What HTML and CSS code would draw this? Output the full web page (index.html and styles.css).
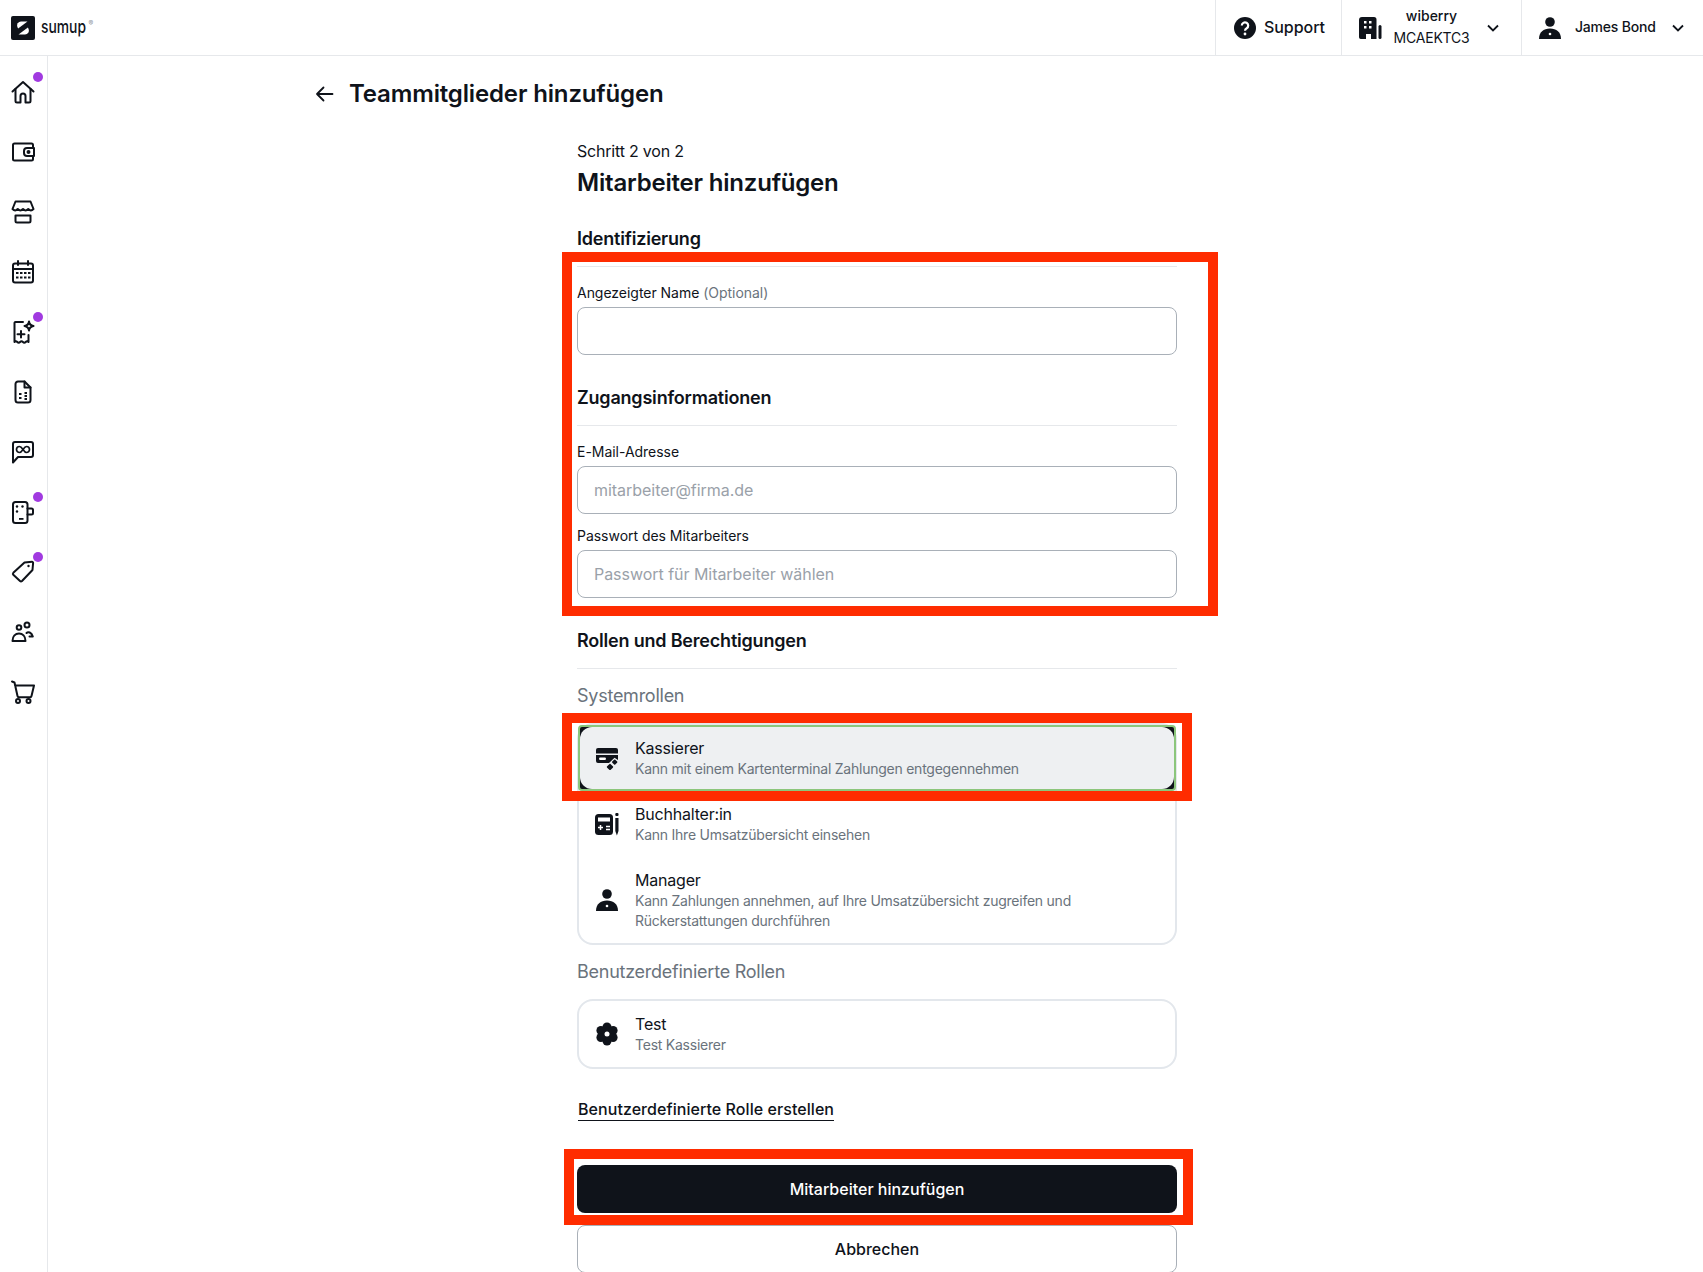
FILE: index.html
```html
<!DOCTYPE html>
<html lang="de">
<head>
    <meta charset="UTF-8">
    <meta name="viewport" content="width=device-width, initial-scale=1.0">
    <title>Teammitglieder hinzufügen</title>
    <link rel="stylesheet" href="styles.css">
</head>
<body>
    <header class="topbar">
        <div class="brand">
            <svg class="brand-mark" viewBox="0 0 24 24">
                <rect width="24" height="24" rx="2" fill="#0f131a"/>
                <path d="M16.5 5.5H10a4 4 0 0 0-3.6 5.6l.7 1.4 9.4-7z" fill="#fff"/>
                <path d="M7.5 18.5H14a4 4 0 0 0 3.6-5.6l-.7-1.4-9.4 7z" fill="#fff"/>
            </svg>
            <span class="brand-name">sumup</span><span class="brand-reg">®</span>
        </div>
        <div class="topbar-cells">
            <div class="cell cell-support">
                <svg class="icon" viewBox="0 0 24 24">
                    <circle cx="12" cy="12" r="11" fill="#0f131a"/>
                    <path d="M8.8 9.6a3.2 3.2 0 1 1 4.9 2.7c-1.1.7-1.7 1.2-1.7 2.5" fill="none" stroke="#fff" stroke-width="2.2"/>
                    <circle cx="12" cy="18" r="1.4" fill="#fff"/>
                </svg>
                <span class="support-label">Support</span>
            </div>
            <div class="cell cell-merchant">
                <svg class="icon" viewBox="0 0 24 24">
                    <path d="M3 1h12a2.5 2.5 0 0 1 2.5 2.5V23H12v-5H7v5H1.8A1.8 1.8 0 0 1 0 21.2V4a3 3 0 0 1 3-3z" fill="#0f131a"/>
                    <rect x="19.5" y="9" width="3" height="14" rx="1.5" fill="#0f131a"/>
                    <g fill="#fff">
                        <rect x="5" y="5" width="2.5" height="2.5"/><rect x="10" y="5" width="2.5" height="2.5"/>
                        <rect x="5" y="10" width="2.5" height="2.5"/><rect x="10" y="10" width="2.5" height="2.5"/>
                    </g>
                </svg>
                <div class="merchant-text">
                    <span class="merchant-name">wiberry</span>
                    <span class="merchant-code">MCAEKTC3</span>
                </div>
                <svg class="chevron" viewBox="0 0 16 16"><path d="M3 5.5l5 5 5-5"/></svg>
            </div>
            <div class="cell cell-user">
                <svg class="icon" viewBox="0 0 24 24">
                    <circle cx="12" cy="6" r="4.8" fill="#0f131a"/>
                    <path d="M1 23c0-7 4.5-10.5 11-10.5S23 16 23 23z" fill="#0f131a"/>
                    <circle cx="12" cy="18" r="1.3" fill="#fff"/>
                </svg>
                <span class="user-name">James Bond</span>
                <svg class="chevron" viewBox="0 0 16 16"><path d="M3 5.5l5 5 5-5"/></svg>
            </div>
        </div>
    </header>

    <div class="page">
        <nav class="sidebar">
            <a class="nav-item">
                <svg class="icon line" viewBox="0 0 24 24"><path d="M1.5 11.5 12 2l10.5 9.5"/><path d="M4.5 9v12a1.500 1.500 0 0 0 1.500 1.500h3.500V16a2.500 2.500 0 0 1 5 0v6.500H18a1.500 1.500 0 0 0 1.500-1.500V9"/></svg>
                <span class="dot"></span>
            </a>
            <a class="nav-item">
                <svg class="icon line" viewBox="0 0 24 24"><path d="M22 8V5a1.500 1.500 0 0 0-1.500-1.500h-17A1.500 1.500 0 0 0 2 5v14a1.500 1.500 0 0 0 1.500 1.500h17A1.500 1.500 0 0 0 22 19v-3"/><path d="M23 8h-7a3 3 0 0 0-3 3v2a3 3 0 0 0 3 3h7z"/><circle cx="17.5" cy="12" r="1" fill="#0f131a"/></svg>
            </a>
            <a class="nav-item">
                <svg class="icon line" viewBox="0 0 24 24"><path d="M4.500 1.500h15l3 7.500q-2.600 2.800-5.250 0q-2.600 2.800-5.250 0q-2.600 2.800-5.250 0q-2.600 2.800-5.250 0z"/><path d="M4.500 15.500h15V21a1.500 1.500 0 0 1-1.500 1.500H6A1.500 1.500 0 0 1 4.500 21z"/></svg>
            </a>
            <a class="nav-item">
                <svg class="icon line" viewBox="0 0 24 24"><rect x="2" y="3.5" width="20" height="19" rx="2"/><path d="M2 9h20M7 1v4M17 1v4"/><g class="icon-dots"><rect x="5" y="12" width="2.5" height="2"/><rect x="9" y="12" width="2.500" height="2"/><rect x="13" y="12" width="2.5" height="2"/><rect x="17" y="12" width="2.5" height="2"/><rect x="5" y="16.5" width="2.5" height="2"/><rect x="9" y="16.5" width="2.5" height="2"/><rect x="13" y="16.5" width="2.5" height="2"/><rect x="17" y="16.5" width="2.5" height="2"/></g></svg>
            </a>
            <a class="nav-item">
                <svg class="icon line" viewBox="0 0 24 24"><path d="M12 2H4.500a1 1 0 0 0-1 1v19q1.400-1.500 2.800 0t2.800 0t2.800 0t2.800 0t2.800 0V15"/><path d="M18 1.500c.4 3 1.500 4.100 4.500 4.500-3 .4-4.100 1.500-4.500 4.500-.4-3-1.500-4.100-4.500-4.500 3-.4 4.100-1.500 4.500-4.500z"/><path d="M10 11v6.500M6.500 14.200h7"/></svg>
                <span class="dot"></span>
            </a>
            <a class="nav-item">
                <svg class="icon line" viewBox="0 0 24 24"><path d="M13.500 1.500H7A2.500 2.500 0 0 0 4.500 4v16A2.500 2.500 0 0 0 7 22.500h10a2.500 2.500 0 0 0 2.500-2.500V7.500z"/><path d="M13.500 1.500v6h6"/><g class="icon-dots"><rect x="8" y="13" width="2.5" height="2"/><rect x="8" y="17" width="2.5" height="2"/><rect x="13.5" y="12" width="2.5" height="2"/><rect x="13.5" y="15" width="2.5" height="2"/><rect x="13.5" y="18" width="2.5" height="2"/></g></svg>
            </a>
            <a class="nav-item">
                <svg class="icon line" viewBox="0 0 24 24"><path d="M2 22.500V4a2 2 0 0 1 2-2h16a2 2 0 0 1 2 2v11a2 2 0 0 1-2 2H7z"/><path d="M8.500 6.500a3 3 0 0 0 0 6c3 0 4-6 7-6a3 3 0 0 1 0 6c-3 0-4-6-7-6z" stroke-width="1.7"/></svg>
            </a>
            <a class="nav-item">
                <svg class="icon line" viewBox="0 0 24 24"><rect x="2" y="2" width="14.5" height="21" rx="2.5"/><path d="M16.500 8.500h4a1.500 1.500 0 0 1 1.500 1.500v3a1.500 1.500 0 0 1-1.500 1.500h-4"/><g class="icon-dots"><circle cx="6" cy="6.5" r="1.2"/><circle cx="11.5" cy="6.5" r="1.2"/><circle cx="6" cy="11.5" r="1.2"/><rect x="8" y="18" width="4.5" height="1.8"/></g></svg>
                <span class="dot"></span>
            </a>
            <a class="nav-item">
                <svg class="icon line" viewBox="0 0 24 24"><path d="M13.500 2.500 21 1.800a1 1 0 0 1 1.100 1.100L21.500 10 11 21a1.500 1.500 0 0 1-2 0l-6.700-6.200a1.500 1.500 0 0 1 0-2z"/><circle class="icon-dots" cx="17.5" cy="6" r="1.2"/></svg>
                <span class="dot"></span>
            </a>
            <a class="nav-item">
                <svg class="icon line" viewBox="0 0 24 24"><circle cx="8" cy="7.5" r="2.300"/><circle cx="16" cy="5" r="2.500"/><path d="M1.500 21c0-5 3-7.500 6.500-7.500s6.500 2.500 6.500 7.500z"/><path d="M15.500 13c1.500-1.500 5-1 6.300 3.500h-3.300"/></svg>
            </a>
            <a class="nav-item">
                <svg class="icon line" viewBox="0 0 24 24"><path d="M1 1.500l2.500 1 3 13.500a1.500 1.500 0 0 0 1.500 1.200h11a1.500 1.500 0 0 0 1.500-1.200L23 5.500H4"/><circle cx="7" cy="21" r="2"/><circle cx="17.5" cy="21" r="2"/></svg>
            </a>
        </nav>

        <main class="content">
            <div class="title-row">
                <svg class="icon arrow" viewBox="0 0 24 24"><path d="M19.5 12H4M10.500 5.500 4 12l6.500 6.500"/></svg>
                <h1>Teammitglieder hinzufügen</h1>
            </div>

            <form class="form">
                <p class="step">Schritt 2 von 2</p>
                <h2>Mitarbeiter hinzufügen</h2>

                <h3 class="section first">Identifizierung</h3>
                <label class="label">Angezeigter Name <span class="optional">(Optional)</span></label>
                <input class="input" type="text">

                <h3 class="section">Zugangsinformationen</h3>
                <label class="label">E-Mail-Adresse</label>
                <input class="input" type="text" placeholder="mitarbeiter@firma.de">
                <label class="label next">Passwort des Mitarbeiters</label>
                <input class="input" type="text" placeholder="Passwort für Mitarbeiter wählen">

                <h3 class="section">Rollen und Berechtigungen</h3>
                <p class="group-title system">Systemrollen</p>
                <div class="role-group">
                    <div class="role-selected">
                        <div class="role">
                            <svg class="icon" viewBox="0 0 24 24">
                                <path d="M3 2h18a2 2 0 0 1 2 2v3.500H1V4a2 2 0 0 1 2-2z"/>
                                <path d="M1 9h22v5l-3.500-2.300-5.500 5.300H3a2 2 0 0 1-2-2z"/>
                                <rect x="4" y="11.5" width="7" height="2.5" rx="1.2" fill="#fff"/>
                                <rect x="12.5" y="18.5" width="5" height="5" rx="1" transform="rotate(45 15 21)"/>
                                <rect x="17.6" y="14" width="4.2" height="4.2" rx=".8" transform="rotate(45 19.7 16.1)"/>
                            </svg>
                            <div class="role-text">
                                <span class="role-name">Kassierer</span>
                                <span class="role-desc">Kann mit einem Kartenterminal Zahlungen entgegennehmen</span>
                            </div>
                        </div>
                    </div>
                    <div class="role">
                        <svg class="icon" viewBox="0 0 24 24">
                            <rect x="0" y="2" width="18" height="21" rx="3.5"/>
                            <rect x="3" y="5.5" width="12" height="4" fill="#fff"/>
                            <path d="M3 15.500h5M5.500 13v5M11 14.500h4M11 17.500h4" stroke="#fff" stroke-width="1.5" fill="none"/>
                            <path d="M20.300 6h3.200v13l-1.600 4.500-1.600-4.500z"/>
                            <rect x="20.3" y="1" width="3.2" height="3" rx="1"/>
                        </svg>
                        <div class="role-text">
                            <span class="role-name">Buchhalter:in</span>
                            <span class="role-desc">Kann Ihre Umsatzübersicht einsehen</span>
                        </div>
                    </div>
                    <div class="role">
                        <svg class="icon" viewBox="0 0 24 24">
                            <circle cx="12" cy="6" r="4.8"/>
                            <path d="M1 23c0-7 4.500-10.500 11-10.500S23 16 23 23z"/>
                            <circle cx="12" cy="18" r="1.3" fill="#fff"/>
                        </svg>
                        <div class="role-text">
                            <span class="role-name">Manager</span>
                            <span class="role-desc">Kann Zahlungen annehmen, auf Ihre Umsatzübersicht zugreifen und Rückerstattungen durchführen</span>
                        </div>
                    </div>
                </div>

                <p class="group-title custom">Benutzerdefinierte Rollen</p>
                <div class="role-group">
                    <div class="role">
                        <svg class="icon" viewBox="0 0 24 24">
                            <circle cx="12" cy="12" r="7.5"/>
                            <circle cx="12" cy="5" r="4.5"/><circle cx="12" cy="19" r="4.5"/>
                            <circle cx="5.9" cy="8.5" r="4.5"/><circle cx="18.1" cy="8.5" r="4.5"/>
                            <circle cx="5.9" cy="15.5" r="4.5"/><circle cx="18.1" cy="15.5" r="4.5"/>
                            <circle cx="12" cy="12" r="2.5" fill="#fff"/>
                        </svg>
                        <div class="role-text">
                            <span class="role-name">Test</span>
                            <span class="role-desc">Test Kassierer</span>
                        </div>
                    </div>
                </div>

                <a class="create-link">Benutzerdefinierte Rolle erstellen</a>

                <button type="button" class="btn btn-primary">Mitarbeiter hinzufügen</button>
                <button type="button" class="btn btn-secondary">Abbrechen</button>
            </form>
        </main>
    </div>

    <div class="mark mark-fields"></div>
    <div class="mark mark-role"></div>
    <div class="mark mark-submit"></div>
</body>
</html>
```

FILE: styles.css
```css
html, body {
    margin: 0;
    padding: 0;
    height: 1272px;
    overflow: hidden;
}
body {
    position: relative;
    font-family: Inter, "Liberation Sans", sans-serif;
    color: #0f131a;
    background-color: white;
}
.icon {
    display: block;
    width: 24px;
    height: 24px;
    flex: none;
    fill: #0f131a;
}
.icon.line, .arrow {
    fill: none;
    stroke: #0f131a;
    stroke-width: 2;
    stroke-linejoin: round;
    stroke-linecap: round;
}
.icon-dots {
    fill: #0f131a;
    stroke: none;
}

/* top bar */
.topbar {
    height: 55px;
    display: flex;
    justify-content: space-between;
    border-bottom: 1px solid #e6e8eb;
}
.brand {
    display: flex;
    align-items: center;
    padding-left: 11px;
}
.brand-mark {
    width: 24px;
    height: 24px;
    margin-right: 6px;
}
.brand-name {
    display: inline-block;
    margin: -3px -13px 0 0;
    font-size: 18px;
    font-weight: 500;
    transform: scaleX(0.77);
    transform-origin: left;
}
.brand-reg {
    font-size: 7px;
    color: #8a929a;
    margin: -8px 0 0 2px;
}
.topbar-cells {
    display: flex;
}
.cell {
    display: flex;
    align-items: center;
    border-left: 1px solid #e6e8eb;
}
.cell-support {
    width: 108px;
    padding-left: 17px;
    gap: 7px;
}
.support-label {
    margin-top: -2px;
    font-size: 16px;
    font-weight: 500;
    letter-spacing: -0.05px;
}
.cell-merchant {
    width: 162px;
    padding-left: 17px;
}
.merchant-text {
    width: 75px;
    margin: -2px 0 0 11px;
    display: flex;
    flex-direction: column;
    align-items: center;
    gap: 3px;
    font-size: 14px;
    line-height: 19px;
}
.merchant-name {
    font-weight: 500;
}
.merchant-code {
    letter-spacing: -0.2px;
}
.chevron {
    width: 16px;
    height: 16px;
    margin-left: 16px;
    fill: none;
    stroke: #0f131a;
    stroke-width: 1.8;
}
.cell-user {
    width: 165px;
    padding-left: 16px;
    gap: 13px;
}
.cell-user .chevron {
    margin-left: 1px;
}
.user-name {
    margin-top: -2px;
    font-size: 14px;
    font-weight: 500;
    letter-spacing: -0.2px;
    white-space: nowrap;
}

/* sidebar */
.page {
    display: flex;
}
.sidebar {
    width: 36px;
    height: 1192px;
    flex: none;
    border-right: 1px solid #e6e8eb;
    padding: 24px 0 0 11px;
    display: flex;
    flex-direction: column;
    gap: 36px;
}
.nav-item {
    position: relative;
    display: block;
    width: 24px;
    height: 24px;
}
.dot {
    position: absolute;
    top: -8px;
    right: -8px;
    width: 10px;
    height: 10px;
    border-radius: 50%;
    background-color: #a13ae0;
}

/* main */
.content {
    flex: 1;
    padding: 22px 0 0 265px;
}
.title-row {
    display: flex;
    align-items: center;
    gap: 12px;
}
.arrow {
    stroke-width: 1.8;
}
h1 {
    margin: 0;
    font-size: 24px;
    line-height: 32px;
    font-weight: 600;
    letter-spacing: -0.15px;
}
.form {
    width: 600px;
    margin: 29px 0 0 264px;
}
.step {
    margin: 0;
    font-size: 16px;
    line-height: 24px;
    letter-spacing: -0.2px;
}
h2 {
    margin: 4px 0 0;
    font-size: 24px;
    line-height: 32px;
    font-weight: 600;
    letter-spacing: -0.2px;
}
.section {
    margin: 31px 0 16px;
    padding-bottom: 15px;
    border-bottom: 1px solid #e6e8eb;
    font-size: 18px;
    line-height: 24px;
    font-weight: 600;
    letter-spacing: -0.2px;
}
.section.first {
    margin-top: 28px;
}
.label {
    display: block;
    margin-bottom: 4px;
    font-size: 14px;
    line-height: 20px;
    letter-spacing: -0.03px;
}
.label.next {
    margin-top: 12px;
}
.optional {
    color: #6a737c;
}
.input {
    display: block;
    width: 100%;
    height: 48px;
    box-sizing: border-box;
    padding: 0 16px;
    border: 1px solid #a9b0b8;
    border-radius: 8px;
    background-color: white;
    font-family: Inter, "Liberation Sans", sans-serif;
    font-size: 16px;
    letter-spacing: -0.04px;
    color: #0f131a;
}
.input::placeholder {
    color: #9aa1a9;
}

/* roles */
.group-title {
    margin: 0 0 15px;
    font-size: 18px;
    line-height: 24px;
    letter-spacing: -0.25px;
    color: #6a737c;
}
.group-title.system {
    margin-top: -1px;
}
.group-title.custom {
    margin-top: 15px;
}
.role-group {
    border: 2px solid #e3e7ec;
    border-radius: 16px;
}
.role {
    display: flex;
    align-items: center;
    gap: 16px;
    padding: 12px 16px;
}
.role-selected {
    margin: 0 -1px;
    border: 2px solid #8cc67c;
    border-radius: 4px;
    background-color: #0f131a;
}
.role-selected .role {
    background-color: #eef0f2;
    border-radius: 12px;
    padding: 10px 15px;
}
.role-text {
    display: flex;
    flex-direction: column;
}
.role-name {
    font-size: 16px;
    line-height: 22px;
    letter-spacing: -0.2px;
}
.role-desc {
    font-size: 14px;
    line-height: 20px;
    letter-spacing: -0.24px;
    color: #6a737c;
}

/* actions */
.create-link {
    display: table;
    margin: 30px 0 0 1px;
    font-size: 16px;
    font-weight: 500;
    line-height: 21px;
    letter-spacing: 0.06px;
    border-bottom: 1px solid #0f131a;
}
.btn {
    display: block;
    width: 100%;
    height: 48px;
    border-radius: 8px;
    font-family: Inter, "Liberation Sans", sans-serif;
    font-size: 16px;
    font-weight: 500;
}
.btn-primary {
    margin-top: 44px;
    border: none;
    background-color: #0f131a;
    color: white;
}
.btn-secondary {
    margin-top: 12px;
    border: 1px solid #a9b0b8;
    background-color: white;
    color: #0f131a;
}

/* red markers drawn over the shot */
.mark {
    position: absolute;
    box-sizing: border-box;
    border: 10px solid #ff2c00;
}
.mark-fields {
    left: 562px;
    top: 252px;
    width: 656px;
    height: 364px;
}
.mark-role {
    left: 562px;
    top: 713px;
    width: 630px;
    height: 88px;
}
.mark-submit {
    left: 564px;
    top: 1149px;
    width: 629px;
    height: 76px;
}
```
